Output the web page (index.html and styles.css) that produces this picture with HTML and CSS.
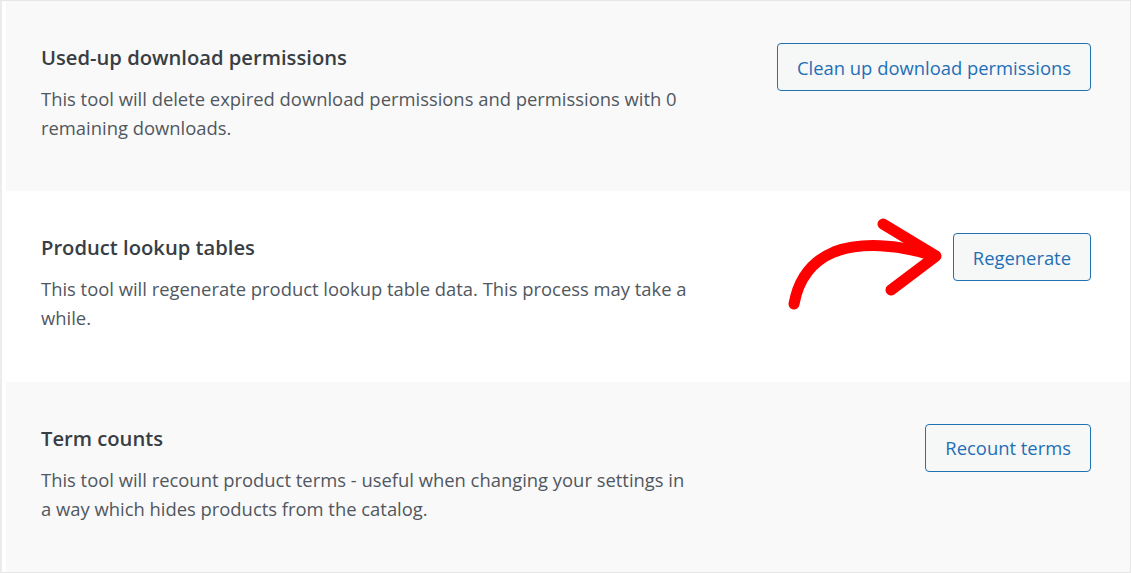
FILE: index.html
```html
<!DOCTYPE html>
<html lang="en">
<head>
<meta charset="utf-8">
<title>Tools</title>
<link rel="stylesheet" href="styles.css">
</head>
<body>
<div class="tools">
  <div class="row alt">
    <div class="info">
      <h3 class="title">Used-up download permissions</h3>
      <p class="desc">This tool will delete expired download permissions and permissions with 0 remaining downloads.</p>
    </div>
    <button class="btn">Clean up download permissions</button>
  </div>
  <div class="row">
    <div class="info">
      <h3 class="title">Product lookup tables</h3>
      <p class="desc">This tool will regenerate product lookup table data. This process may take a while.</p>
    </div>
    <div class="action">
      <svg class="arrow" width="170" height="110" viewBox="780 210 170 110" aria-hidden="true">
        <path d="M796 304 C 800 282, 812 262, 836 252 C 862 242, 900 244, 936 256" fill="none" stroke="#f00" stroke-width="11" stroke-linecap="round"/>
        <path d="M885 224 L 938 256 L 893 290" fill="none" stroke="#f00" stroke-width="11" stroke-linecap="round" stroke-linejoin="round"/>
      </svg>
      <button class="btn">Regenerate</button>
    </div>
  </div>
  <div class="row alt">
    <div class="info">
      <h3 class="title">Term counts</h3>
      <p class="desc">This tool will recount product terms - useful when changing your settings in a way which hides products from the catalog.</p>
    </div>
    <button class="btn">Recount terms</button>
  </div>
</div>
</body>
</html>
```
FILE: styles.css
```css
html, body {
  margin: 0;
  padding: 0;
  background: #ffffff;
}
body {
  font-family: "Open Sans", "Noto Sans", "Liberation Sans", sans-serif;
}
.tools {
  width: 1131px;
  height: 573px;
  box-sizing: border-box;
  border: 1px solid #e6e6e6;
  border-left: 2px solid #ececec;
  padding-left: 4px;
  display: flex;
  flex-direction: column;
}
.row {
  flex: 1;
  display: flex;
  justify-content: space-between;
  align-items: flex-start;
  padding: 42px 39px 0 35px;
  background: #ffffff;
}
.row.alt {
  background: #f9f9f9;
}
.info {
  width: 652px;
}
.title {
  margin: 0 0 13px;
  font-size: 20.2px;
  line-height: 28px;
  font-weight: 600;
  color: #383e44;
}
.desc {
  margin: 0;
  font-size: 18.4px;
  line-height: 29px;
  color: #50575e;
}
.action {
  position: relative;
}
.arrow {
  position: absolute;
  left: -175px;
  top: -23px;
}
.btn {
  height: 48px;
  padding: 0 19px;
  font-family: inherit;
  font-size: 18.4px;
  color: #1f6fb5;
  background: #f6f7f7;
  border: 1px solid #2271b1;
  border-radius: 4px;
  cursor: pointer;
}
```
